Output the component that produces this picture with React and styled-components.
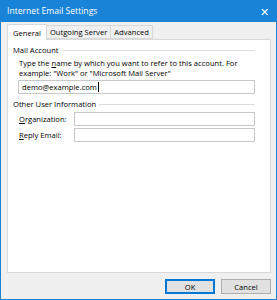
import styled, { createGlobalStyle } from "styled-components";

const Global = createGlobalStyle`
  html, body { margin: 0; padding: 0; background: #ffffff; }
  * { box-sizing: border-box; }
`;

const Window = styled.div`
  width: 277px;
  height: 300px;
  display: flex;
  flex-direction: column;
  background: #f0f0f0;
  border: 1px solid #1883d7;
  border-top: none;
  font-family: "Open Sans", "Noto Sans", sans-serif;
  font-size: 7.6px;
  color: #000000;
`;

const TitleBar = styled.div`
  height: 22px;
  margin: 0 -1px;
  padding: 0 8px 0 7px;
  display: flex;
  align-items: center;
  justify-content: space-between;
  background: #1883d7;
  color: #ffffff;
  font-size: 8.6px;
`;

const Close = styled.span`
  font-size: 11px;
  line-height: 1;
`;

const Body = styled.div`
  flex: 1;
  display: flex;
  flex-direction: column;
  padding: 2px 5px 0 6px;
`;

const Tabs = styled.div`
  display: flex;
  align-items: flex-end;
  height: 15px;
  position: relative;
  z-index: 1;
`;

const Tab = styled.div`
  height: ${(p) => (p.$active ? "16px" : "14px")};
  margin-bottom: ${(p) => (p.$active ? "-1px" : "0")};
  padding: 0 ${(p) => (p.$active ? "5px" : "3px")};
  display: flex;
  align-items: center;
  background: ${(p) => (p.$active ? "#ffffff" : "#f0f0f0")};
  border: 1px solid #d9d9d9;
  border-bottom: ${(p) => (p.$active ? "none" : "1px solid #d9d9d9")};
  margin-left: ${(p) => (p.$first ? "0" : "-1px")};
`;

const Panel = styled.div`
  height: 234px;
  background: #ffffff;
  border: 1px solid #d9d9d9;
  padding: 4px 15px 0 5px;
`;

const Group = styled.div`
  display: flex;
  align-items: center;
  gap: 3px;
  height: 12px;
  margin-top: ${(p) => p.$top || 0}px;

  &::after {
    content: "";
    flex: 1;
    height: 1px;
    background: #dcdcdc;
  }
`;

const Indent = styled.div`
  padding-left: 5px;
`;

const Description = styled.p`
  margin: 3px 0 0 1px;
  line-height: 9.5px;
  white-space: nowrap;
`;

const Field = styled.div`
  height: 14px;
  flex: 1;
  display: flex;
  align-items: center;
  padding-left: 3px;
  background: #ffffff;
  border: 1px solid #c8c8c8;
`;

const Caret = styled.span`
  display: inline-block;
  width: 1px;
  height: 10px;
  margin-left: 1px;
  background: #000000;
`;

const Row = styled.div`
  display: flex;
  align-items: center;
  margin-top: ${(p) => p.$top || 0}px;
`;

const Label = styled.span`
  width: 56px;
  padding-left: 1px;
`;

const Footer = styled.div`
  display: flex;
  justify-content: flex-end;
  gap: 6px;
  padding: 6px 0 0;
`;

const Button = styled.div`
  width: 50px;
  height: 15px;
  display: flex;
  align-items: center;
  justify-content: center;
  background: #e1e1e1;
  border: 1px solid ${(p) => (p.$primary ? "#0078d7" : "#adadad")};
  box-shadow: ${(p) => (p.$primary ? "inset 0 0 0 1px #0078d7" : "none")};
`;

export default function App() {
  return (
    <Window>
      <Global />
      <TitleBar>
        <span>Internet Email Settings</span>
        <Close>✕</Close>
      </TitleBar>
      <Body>
        <Tabs>
          <Tab $active $first>General</Tab>
          <Tab>Outgoing Server</Tab>
          <Tab>Advanced</Tab>
        </Tabs>
        <Panel>
          <Group>Mail Account</Group>
          <Indent>
            <Description>
              Type the <u>n</u>ame by which you want to refer to this account. For
              <br />
              example: "Work" or "Microsoft Mail Server"
            </Description>
            <Row $top={2}>
              <Field>
                demo@example.com<Caret />
              </Field>
            </Row>
          </Indent>
          <Group $top={4}>Other User Information</Group>
          <Indent>
            <Row $top={2}>
              <Label><u>O</u>rganization:</Label>
              <Field />
            </Row>
            <Row $top={2}>
              <Label><u>R</u>eply Email:</Label>
              <Field />
            </Row>
          </Indent>
        </Panel>
        <Footer>
          <Button $primary>OK</Button>
          <Button>Cancel</Button>
        </Footer>
      </Body>
    </Window>
  );
}
